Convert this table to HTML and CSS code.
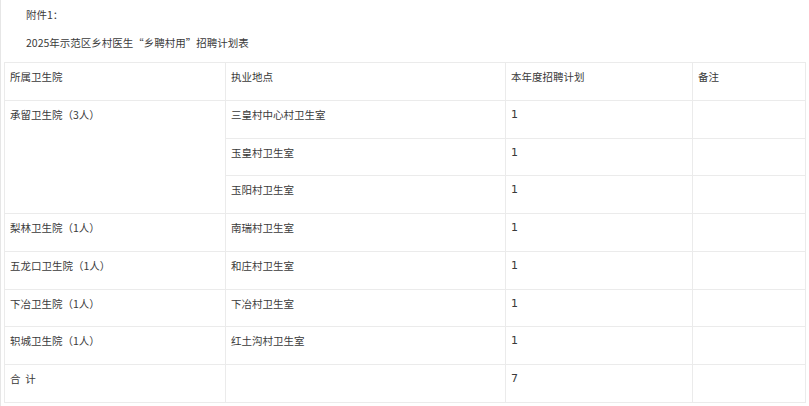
FILE: index.html
```html
<!DOCTYPE html>
<html lang="zh">
<head>
<meta charset="utf-8">
<link rel="stylesheet" href="styles.css">
</head>
<body>
<div class="page">
  <p class="line first">附件1：</p>
  <p class="line second">2025年示范区乡村医生“乡聘村用”招聘计划表</p>
  <table class="plan">
    <colgroup>
      <col class="c1"><col class="c2"><col class="c3"><col class="c4">
    </colgroup>
    <tr><td>所属卫生院</td><td>执业地点</td><td>本年度招聘计划</td><td>备注</td></tr>
    <tr><td rowspan="3">承留卫生院（3人）</td><td>三皇村中心村卫生室</td><td class="num">1</td><td></td></tr>
    <tr><td>玉皇村卫生室</td><td class="num">1</td><td></td></tr>
    <tr><td>玉阳村卫生室</td><td class="num">1</td><td></td></tr>
    <tr><td>梨林卫生院（1人）</td><td>南瑞村卫生室</td><td class="num">1</td><td></td></tr>
    <tr><td>五龙口卫生院（1人）</td><td>和庄村卫生室</td><td class="num">1</td><td></td></tr>
    <tr><td>下冶卫生院（1人）</td><td>下冶村卫生室</td><td class="num">1</td><td></td></tr>
    <tr><td>轵城卫生院（1人）</td><td>红土沟村卫生室</td><td class="num">1</td><td></td></tr>
    <tr><td>合&nbsp;&nbsp;计</td><td></td><td class="num">7</td><td></td></tr>
  </table>
</div>
</body>
</html>
```

FILE: styles.css
```css
html, body {
  margin: 0;
  padding: 0;
  background: #fff;
}
body {
  font-family: "Noto Sans CJK SC", "Noto Sans", sans-serif;
  font-size: 10.5px;
  color: #3a3a3a;
}
.page {
  border-left: 1px solid #e6e6e6;
  min-height: 406px;
  box-sizing: border-box;
  padding: 0 0 0 3px;
}
.line {
  margin: 0;
  padding-left: 22px;
  line-height: 18px;
}
.first {
  padding-top: 6px;
}
.second {
  padding-top: 10px;
  margin-bottom: 10px;
}
.plan {
  border-collapse: collapse;
  width: 801px;
  table-layout: fixed;
}
.c1 { width: 221px; }
.c2 { width: 280px; }
.c3 { width: 187px; }
.c4 { width: 113px; }
.plan td {
  border: 1px solid #ebebeb;
  vertical-align: top;
  padding: 5px 5px 0 5px;
  height: 37.78px;
  box-sizing: border-box;
  line-height: 18px;
}
.plan td.num {
  font-family: "DejaVu Sans", sans-serif;
  font-size: 11px;
}
```
